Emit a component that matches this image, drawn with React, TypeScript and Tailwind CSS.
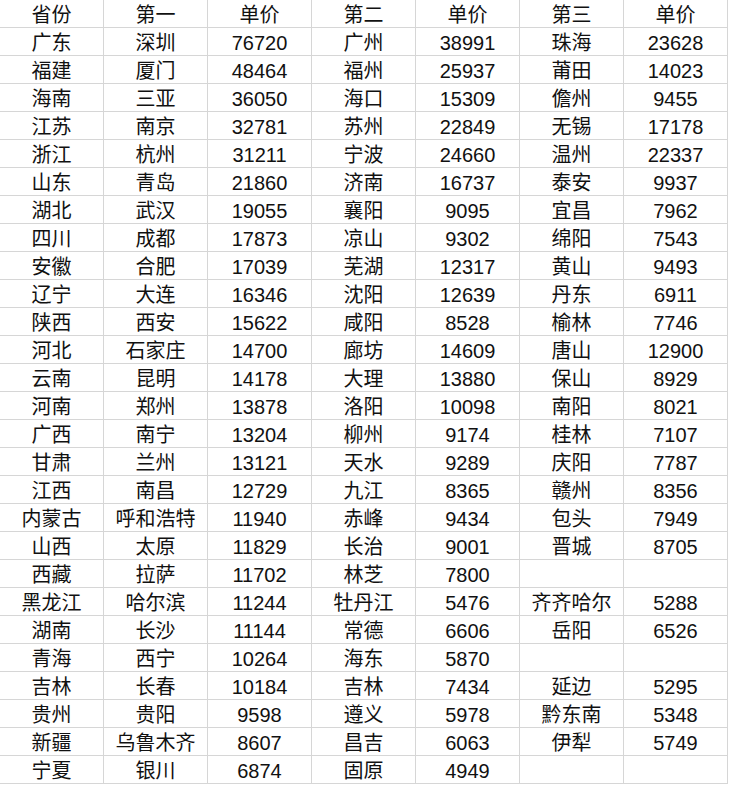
const header = ["省份", "第一", "单价", "第二", "单价", "第三", "单价"];

const rows: string[][] = [
  ["广东", "深圳", "76720", "广州", "38991", "珠海", "23628"],
  ["福建", "厦门", "48464", "福州", "25937", "莆田", "14023"],
  ["海南", "三亚", "36050", "海口", "15309", "儋州", "9455"],
  ["江苏", "南京", "32781", "苏州", "22849", "无锡", "17178"],
  ["浙江", "杭州", "31211", "宁波", "24660", "温州", "22337"],
  ["山东", "青岛", "21860", "济南", "16737", "泰安", "9937"],
  ["湖北", "武汉", "19055", "襄阳", "9095", "宜昌", "7962"],
  ["四川", "成都", "17873", "凉山", "9302", "绵阳", "7543"],
  ["安徽", "合肥", "17039", "芜湖", "12317", "黄山", "9493"],
  ["辽宁", "大连", "16346", "沈阳", "12639", "丹东", "6911"],
  ["陕西", "西安", "15622", "咸阳", "8528", "榆林", "7746"],
  ["河北", "石家庄", "14700", "廊坊", "14609", "唐山", "12900"],
  ["云南", "昆明", "14178", "大理", "13880", "保山", "8929"],
  ["河南", "郑州", "13878", "洛阳", "10098", "南阳", "8021"],
  ["广西", "南宁", "13204", "柳州", "9174", "桂林", "7107"],
  ["甘肃", "兰州", "13121", "天水", "9289", "庆阳", "7787"],
  ["江西", "南昌", "12729", "九江", "8365", "赣州", "8356"],
  ["内蒙古", "呼和浩特", "11940", "赤峰", "9434", "包头", "7949"],
  ["山西", "太原", "11829", "长治", "9001", "晋城", "8705"],
  ["西藏", "拉萨", "11702", "林芝", "7800", "", ""],
  ["黑龙江", "哈尔滨", "11244", "牡丹江", "5476", "齐齐哈尔", "5288"],
  ["湖南", "长沙", "11144", "常德", "6606", "岳阳", "6526"],
  ["青海", "西宁", "10264", "海东", "5870", "", ""],
  ["吉林", "长春", "10184", "吉林", "7434", "延边", "5295"],
  ["贵州", "贵阳", "9598", "遵义", "5978", "黔东南", "5348"],
  ["新疆", "乌鲁木齐", "8607", "昌吉", "6063", "伊犁", "5749"],
  ["宁夏", "银川", "6874", "固原", "4949", "", ""],
];

function Cell({ text }: { text: string }) {
  return (
    <div className="flex h-[28px] items-center justify-center border-r border-b border-[#d6d6d6] pt-[3px] text-[20px] leading-none text-[#111]">
      {text}
    </div>
  );
}

export default function App() {
  return (
    <div
      className="min-h-screen w-[729px] bg-white"
      style={{ fontFamily: '"Liberation Sans", "Noto Sans CJK SC", sans-serif' }}
    >
      <div className="grid grid-cols-[repeat(7,104px)]">
        {header.map((h, i) => (
          <Cell key={"h" + i} text={h} />
        ))}
        {rows.map((r, ri) => r.map((c, ci) => <Cell key={ri + "-" + ci} text={c} />))}
      </div>
    </div>
  );
}
